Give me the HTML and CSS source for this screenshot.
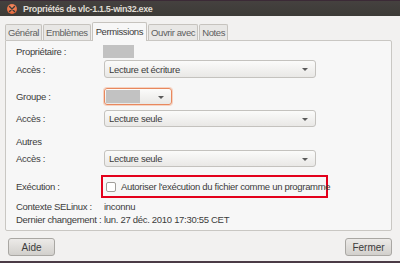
FILE: index.html
```html
<!DOCTYPE html>
<html lang="fr">
<head>
    <meta charset="UTF-8">
    <title>Propriétés de vlc-1.1.5-win32.exe</title>
    <link rel="stylesheet" href="styles.css">
</head>
<body>
    <div class="window">
        <div class="titlebar">
            <span class="close-btn">
                <svg width="8" height="8" viewBox="0 0 8 8"><path d="M1.5 1.5 L6.5 6.5 M6.5 1.5 L1.5 6.5" stroke="#3c3b37" stroke-width="1.4" stroke-linecap="round"/></svg>
            </span>
            <span class="title">Propriétés de vlc-1.1.5-win32.exe</span>
        </div>

        <div class="content">
            <!-- Onglets -->
            <ul class="tabs">
                <li>Général</li>
                <li>Emblèmes</li>
                <li class="active">Permissions</li>
                <li>Ouvrir avec</li>
                <li>Notes</li>
            </ul>

            <div class="panel">
                <div class="row row-owner">
                    <span class="label">Propriétaire :</span>
                    <span class="masked"></span>
                </div>
                <div class="row row-access1">
                    <span class="label">Accès :</span>
                    <div class="combo">Lecture et écriture<span class="arrow"></span></div>
                </div>
                <div class="row row-group">
                    <span class="label">Groupe :</span>
                    <div class="combo combo-small"><span class="masked-in"></span><span class="arrow"></span></div>
                </div>
                <div class="row row-access2">
                    <span class="label">Accès :</span>
                    <div class="combo">Lecture seule<span class="arrow"></span></div>
                </div>
                <div class="row row-others">
                    <span class="label">Autres</span>
                </div>
                <div class="row row-access3">
                    <span class="label">Accès :</span>
                    <div class="combo">Lecture seule<span class="arrow"></span></div>
                </div>
                <div class="row row-exec">
                    <span class="label">Exécution :</span>
                    <div class="highlight">
                        <span class="checkbox"></span>
                        <span>Autoriser l'exécution du fichier comme un programme</span>
                    </div>
                </div>
                <div class="row row-info row-selinux">
                    <span class="label">Contexte SELinux :</span>
                    <span>inconnu</span>
                </div>
                <div class="row row-info">
                    <span class="label">Dernier changement :</span>
                    <span>lun. 27 déc. 2010 17:30:55 CET</span>
                </div>
            </div>

            <div class="footer">
                <button class="btn">Aide</button>
                <button class="btn">Fermer</button>
            </div>
        </div>
    </div>
</body>
</html>
```

FILE: styles.css
```css
body {
    margin: 0;
    font-family: "Liberation Sans", Arial, sans-serif;
    font-size: 9.5px;
    letter-spacing: -0.3px;
    color: #3c3c3c;
}

.window {
    width: 400px;
    height: 263px;
    background-color: #f2f1f0;
    display: flex;
    flex-direction: column;
    border-bottom: 2px solid #4b3b46;
    box-sizing: border-box;
    white-space: nowrap;
}

.titlebar {
    height: 16px;
    background: linear-gradient(#45413f, #3c3b37);
    border-top: 1px solid #3b2a36;
    display: flex;
    align-items: center;
    padding-left: 7px;
    box-sizing: border-box;
}

.close-btn {
    width: 10px;
    height: 10px;
    border-radius: 50%;
    background: radial-gradient(circle at 50% 35%, #f7916a, #e0592a);
    display: flex;
    align-items: center;
    justify-content: center;
}

.title {
    margin-left: 6px;
    color: #dfdbd2;
    font-weight: bold;
    font-size: 9px;
    letter-spacing: -0.35px;
}

.content {
    flex: 1;
    padding: 0 8px 0 5px;
    display: flex;
    flex-direction: column;
}

.tabs {
    list-style-type: none;
    margin: 6px 0 0 0;
    padding: 0;
    display: flex;
    align-items: flex-end;
    height: 18px;
}

.tabs li {
    height: 15px;
    padding: 0 2px;
    margin-right: 1px;
    background-color: #e8e7e5;
    border: 1px solid #c6c3be;
    border-bottom: none;
    border-radius: 2px 2px 0 0;
    color: #5e5e5e;
    line-height: 15px;
    font-size: 9.5px;
    letter-spacing: -0.4px;
}

.tabs li.active {
    height: 18px;
    line-height: 17px;
    background-color: #f7f7f7;
    color: #3c3c3c;
    padding: 0 3px;
    position: relative;
    top: 1px;
    z-index: 1;
}

.panel {
    background-color: #f7f7f7;
    border: 1px solid #c9c7c3;
    border-radius: 0 2px 2px 2px;
    padding: 0 0 4px 10px;
}

.row {
    display: flex;
    align-items: center;
}

.label {
    width: 88px;
    flex-shrink: 0;
}

.row-owner {
    height: 14px;
    margin-top: 3px;
}

.masked {
    width: 31px;
    height: 13px;
    background-color: #c2c2c2;
    margin-left: -1px;
}

.row-access1 {
    height: 18px;
    margin-top: 2px;
}

.row-group {
    height: 17px;
    margin-top: 10px;
}

.row-access2 {
    height: 17px;
    margin-top: 5px;
}

.row-others {
    height: 14px;
    margin-top: 7px;
}

.row-access3 {
    height: 17px;
    margin-top: 2px;
}

.row-exec {
    height: 23px;
    margin-top: 8px;
}

.row-selinux {
    margin-top: 2px;
}

.row-info {
    height: 13px;
}

.combo {
    width: 212px;
    height: 100%;
    box-sizing: border-box;
    border: 1px solid #c4c2be;
    border-radius: 3px;
    background: linear-gradient(#fbfbfa, #e9e8e6);
    padding-left: 4px;
    display: flex;
    align-items: center;
    position: relative;
}

.combo-small {
    width: 68px;
    border: 1px solid #e8885e;
    padding-left: 1px;
    box-shadow: 0 0 0 1px #f6d3c2;
}

.masked-in {
    width: 34px;
    height: 13px;
    background-color: #c2c2c2;
}

.arrow {
    position: absolute;
    right: 7px;
    top: 50%;
    margin-top: -1px;
    border-left: 3px solid transparent;
    border-right: 3px solid transparent;
    border-top: 3px solid #5a5a5a;
}

.highlight {
    margin-left: -3px;
    width: 227px;
    height: 23px;
    box-sizing: border-box;
    border: 2px solid #e3001b;
    display: flex;
    align-items: center;
    padding-left: 3px;
}

.checkbox {
    flex-shrink: 0;
    width: 8px;
    height: 8px;
    border: 1px solid #a09e9a;
    border-radius: 2px;
    background-color: #fff;
    margin-right: 5px;
}

.footer {
    display: flex;
    justify-content: space-between;
    padding: 7px 0 0 3px;
}

.btn {
    width: 47px;
    height: 18px;
    padding: 0;
    font-family: "Liberation Sans", Arial, sans-serif;
    font-size: 10px;
    color: #3c3c3c;
    border: 1px solid #a9a7a3;
    border-radius: 3px;
    background: linear-gradient(#eceae8, #d2d0cc);
}
```
